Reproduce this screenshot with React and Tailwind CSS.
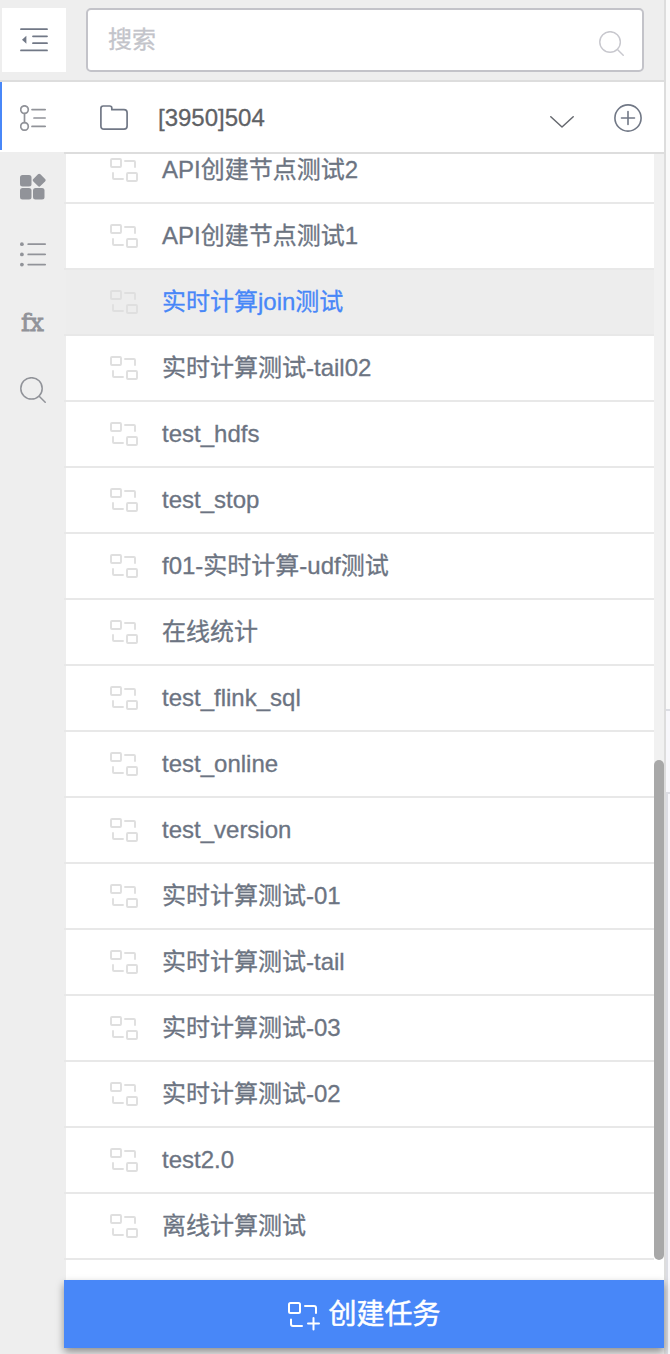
const tasks = [
  'API创建节点测试2', 'API创建节点测试1', '实时计算join测试', '实时计算测试-tail02',
  'test_hdfs', 'test_stop', 'f01-实时计算-udf测试', '在线统计', 'test_flink_sql',
  'test_online', 'test_version', '实时计算测试-01', '实时计算测试-tail',
  '实时计算测试-03', '实时计算测试-02', 'test2.0', '离线计算测试',
];

function CollapseIcon() {
  return (
    <svg width="28" height="24" viewBox="0 0 28 24" fill="none" stroke="#717886" strokeWidth="1.8" strokeLinecap="round">
      <path d="M1 1.2H27M13 8.3H27M13 15.2H27M1 22.4H27" />
      <path d="M2 11.8L6.4 7.8V15.8Z" fill="#717886" stroke="none" />
    </svg>
  );
}

function TreeIcon() {
  return (
    <svg width="26" height="26" viewBox="0 0 26 26" fill="none" stroke="#919399" strokeWidth="1.7" strokeLinecap="round">
      <circle cx="4.5" cy="4.6" r="3.8" />
      <circle cx="4.5" cy="21.4" r="3.8" />
      <path d="M4.5 8.5V17.5M12 4.6H25.2M14 13H25.2M12 21.4H25.2" />
    </svg>
  );
}

function BlocksIcon() {
  return (
    <svg width="26" height="27" viewBox="0 0 26 27" fill="#919399">
      <rect x="0" y="2" width="11.5" height="11.5" rx="2.5" />
      <rect x="0" y="15" width="11.5" height="11.5" rx="2.5" />
      <rect x="13" y="15" width="11.5" height="11.5" rx="2.5" />
      <rect x="14.2" y="2.2" width="10" height="10" rx="1.7" transform="rotate(45 19.2 7.2)" />
    </svg>
  );
}

function ListIcon() {
  return (
    <svg width="26" height="26" viewBox="0 0 26 26" fill="#919399" stroke="#919399" strokeWidth="1.7" strokeLinecap="round">
      <path d="M8.2 2.2H25.2M8.2 12.4H25.2M8.2 22.6H25.2" />
      <g stroke="none">
        <circle cx="1.9" cy="2.2" r="1.9" />
        <circle cx="1.9" cy="12.4" r="1.9" />
        <circle cx="1.9" cy="22.6" r="1.9" />
      </g>
    </svg>
  );
}

function SearchIcon({ className, size }) {
  return (
    <svg className={className} width={size} height={size} viewBox="0 0 26 26" fill="none" stroke="currentColor" strokeWidth="1.5" strokeLinecap="round">
      <circle cx="11.5" cy="11.4" r="10.7" />
      <path d="M19.2 19.2L25.2 25.2" />
    </svg>
  );
}

function FolderIcon() {
  return (
    <svg width="28" height="25" viewBox="0 0 28 25" fill="none" stroke="#717886" strokeWidth="1.7" strokeLinejoin="round">
      <path d="M.9 3.4C.9 1.9 1.7 1 3.2 1H9.6C11 1 11.8 1.8 11.8 3V4.7H24C26 4.7 27.1 5.8 27.1 7.8V21C27.1 23 26 24.1 24 24.1H4C2 24.1.9 23 .9 21Z" />
    </svg>
  );
}

function TaskIcon() {
  return (
    <svg className="shrink-0" width="28" height="24" viewBox="0 0 28 24" fill="none" stroke="#dfdfdf" strokeWidth="1.9" strokeLinecap="round" strokeLinejoin="round">
      <rect x="1" y="1" width="10" height="8" rx="1" />
      <rect x="17" y="15" width="10" height="8" rx="1" />
      <path d="M15 3H24Q25 3 25 4V9M3 15V20Q3 21 4 21H13" />
    </svg>
  );
}

function CreateIcon() {
  return (
    <svg className="relative left-px top-[2px]" width="33" height="29" viewBox="0 0 33 29" fill="none" stroke="#fff" strokeWidth="2" strokeLinecap="round" strokeLinejoin="round">
      <rect x="1" y="1" width="11" height="10" rx="1.5" />
      <path d="M17 4H26Q28 4 28 6V11M3 17.5V22Q3 24 5 24H14M20 21.5H31M25.5 16V27.5" />
    </svg>
  );
}

export default function App() {
  return (
    <div className="flex h-[1354px] w-[670px] overflow-hidden bg-[#eee] font-['Liberation_Sans','Noto_Sans_CJK_SC',sans-serif]">
      <div className="flex w-[664px] shrink-0 flex-col">
        <header className="flex h-[82px] shrink-0 border-b-2 border-[#ddd] pl-0.5 pt-2">
          <button className="flex size-16 items-center justify-center bg-white"><CollapseIcon /></button>
          <label className="ml-5 flex h-16 w-[558px] items-center justify-between rounded-[5px] border-2 border-[#c3c3c9] bg-white pl-5 pr-[18px] text-[24px] text-[#c3c4ca] [-webkit-text-stroke:0.3px]">
            <span>搜索</span>
            <SearchIcon className="relative top-[3px] text-[#c8c8ce]" size={25} />
          </label>
        </header>
        <div className="flex min-h-0 flex-1">
          <nav className="flex w-16 shrink-0 flex-col">
            <div className="flex h-[70px] shrink-0 bg-white">
              <div className="h-[68px] w-0.5 bg-[#4887f8]" />
              <div className="pl-[18px] pt-[23px]"><TreeIcon /></div>
            </div>
            <div className="flex flex-col items-start pl-5 pt-[21px]">
              <BlocksIcon />
              <div className="mt-[42px]"><ListIcon /></div>
              <div className="mt-[42px] h-7 pl-px font-['DejaVu_Serif',serif] text-[25px] leading-[26px] tracking-[-0.5px] text-[#919399] [-webkit-text-stroke:0.8px]">fx</div>
              <SearchIcon className="mt-[39px] text-[#919399]" size={26} />
            </div>
          </nav>
          <main className="flex min-w-0 flex-1 flex-col">
            <div className="flex h-[72px] shrink-0 items-center border-b-2 border-[#ddd] bg-white pl-9 pr-[22px] pt-px">
              <FolderIcon />
              <span className="ml-[30px] flex-1 pt-px text-[24px] text-[#606266] [-webkit-text-stroke:0.3px]">[3950]504</span>
              <svg className="relative top-[4px] mr-10" width="24" height="12" viewBox="0 0 24 12" fill="none" stroke="#65686e" strokeWidth="1.5" strokeLinecap="round" strokeLinejoin="round"><path d="M.8 .8L12 11L23.2 .8" /></svg>
              <svg width="28" height="28" viewBox="0 0 28 28" fill="none" stroke="#717886" strokeWidth="1.6" strokeLinecap="round"><circle cx="14" cy="14" r="13.1" /><path d="M7.5 14H20.5M14 7.5V20.5" /></svg>
            </div>
            <div className="flex h-[1126px] shrink-0">
              <div className="flex w-[590px] flex-col overflow-hidden">
                <ul className="-mt-4 shrink-0">
                  {tasks.map((name, i) => (
                    <li key={name} className="h-[66px] border-b-2 border-[#e8e8e8] pl-0.5">
                      <div className={`flex h-16 items-center pl-11 text-[24px] [-webkit-text-stroke:0.3px] ${i === 2 ? 'bg-[#ededed] text-[#4887f8]' : 'bg-white text-[#6c7482]'}`}>
                        <TaskIcon />
                        <span className="ml-6 whitespace-nowrap">{name}</span>
                      </div>
                    </li>
                  ))}
                </ul>
                <div className="ml-0.5 flex-1 bg-white" />
              </div>
              <div className="w-2.5 bg-[#f1f1f1] pt-[606px]">
                <div className="bg-[linear-gradient(#f1f1f1_50%,#fff_50%)]">
                  <div className="h-[500px] rounded-full bg-[#a8a8a8]" />
                </div>
                <div className="h-5 bg-white" />
              </div>
            </div>
            <button className="z-10 flex h-[68px] shrink-0 items-center justify-center bg-[#4887f8] text-[28px] text-white shadow-[0_4px_8px_rgba(0,0,0,0.4)] [-webkit-text-stroke:0.5px]">
              <CreateIcon />
              <span className="relative top-px ml-2">创建任务</span>
            </button>
          </main>
        </div>
      </div>
      <aside className="flex w-1.5 flex-col">
        <div className="h-[709px] border-l-2 border-[#ddd] bg-[#fafafa]" />
        <div className="flex h-[85px] border-l-2 border-[#ddd]">
          <div className="flex-1 border-y-2 border-[#dcdde3] bg-[#f8f8fc]" />
        </div>
        <div className="flex flex-1 border-l-2 border-[#ddd]">
          <div className="flex-1 border-l-2 border-[#dcdde3] bg-[#f8f8fc]" />
        </div>
      </aside>
    </div>
  );
}
